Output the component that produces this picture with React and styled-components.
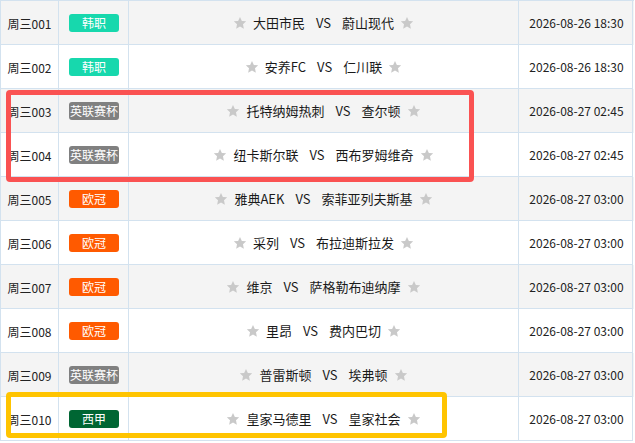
import styled, {createGlobalStyle} from 'styled-components'

const GlobalStyle = createGlobalStyle`
  body {
    margin: 0;
    background: #fff;
    font-family: "Microsoft YaHei", "Noto Sans CJK SC", sans-serif;
    color: #333;
  }
`

const Wrap = styled.div`
  position: relative;
  width: 634px;
`

const Table = styled.div`
  border-top: 1px solid #d3e2ef;
  border-left: 1px solid #d3e2ef;
`

const Row = styled.div`
  display: grid;
  grid-template-columns: 58px 70px 390px 114px;
  background: ${p => (p.$odd ? '#f4f4f4' : '#fff')};
`

const Cell = styled.div`
  height: 44px;
  box-sizing: border-box;
  border-right: 1px solid #d3e2ef;
  border-bottom: 1px solid #d3e2ef;
  display: flex;
  align-items: center;
  justify-content: center;
  font-size: 12px;
  white-space: nowrap;
`

const Num = styled(Cell)`
  padding-top: 1px;
  color: #222;
`

const DateCell = styled(Cell)`
  font-size: 12px;
  color: #222;
  padding-left: 2px;
`

const Badge = styled.span`
  display: inline-flex;
  align-items: center;
  justify-content: center;
  width: 50px;
  height: 18px;
  border-radius: 3px;
  background: ${p => p.$color};
  color: #fff;
  font-size: 12px;
  margin-left: 1px;
`

const Match = styled(Cell)`
  font-size: 13px;
  color: #1a1a1a;
  gap: 6px;
`

const Vs = styled.span`
  margin: 0 5px;
`

const Overlay = styled.div`
  position: absolute;
  left: 6px;
  top: ${p => p.$top}px;
  width: ${p => p.$w}px;
  height: ${p => p.$h}px;
  box-sizing: border-box;
  border: 5px solid ${p => p.$color};
  border-radius: 4px;
  pointer-events: none;
`

const Star = () => (
  <svg width="14" height="14" viewBox="0 0 24 24">
    <path
      d="M12 1.5l3.2 6.9 7.4.8-5.5 5.1 1.5 7.4L12 17.9l-6.6 3.8 1.5-7.4L1.4 9.2l7.4-.8z"
      fill="#c9c9c9"
    />
  </svg>
)

const colors = {
  '韩职': '#17d8ad',
  '英联赛杯': '#808080',
  '欧冠': '#ff5a00',
  '西甲': '#006633',
}

const matches = [
  ['周三001', '韩职', '大田市民', '蔚山现代', '2026-08-26 18:30'],
  ['周三002', '韩职', '安养FC', '仁川联', '2026-08-26 18:30'],
  ['周三003', '英联赛杯', '托特纳姆热刺', '查尔顿', '2026-08-27 02:45'],
  ['周三004', '英联赛杯', '纽卡斯尔联', '西布罗姆维奇', '2026-08-27 02:45'],
  ['周三005', '欧冠', '雅典AEK', '索菲亚列夫斯基', '2026-08-27 03:00'],
  ['周三006', '欧冠', '采列', '布拉迪斯拉发', '2026-08-27 03:00'],
  ['周三007', '欧冠', '维京', '萨格勒布迪纳摩', '2026-08-27 03:00'],
  ['周三008', '欧冠', '里昂', '费内巴切', '2026-08-27 03:00'],
  ['周三009', '英联赛杯', '普雷斯顿', '埃弗顿', '2026-08-27 03:00'],
  ['周三010', '西甲', '皇家马德里', '皇家社会', '2026-08-27 03:00'],
]

const App = () => (
  <Wrap>
    <GlobalStyle />
    <Table>
      {matches.map(([num, league, home, away, time], i) => (
        <Row key={num} $odd={i % 2 === 0}>
          <Num>{num}</Num>
          <Cell><Badge $color={colors[league]}>{league}</Badge></Cell>
          <Match>
            <Star />
            <span>{home}</span>
            <Vs>VS</Vs>
            <span>{away}</span>
            <Star />
          </Match>
          <DateCell>{time}</DateCell>
        </Row>
      ))}
    </Table>
    <Overlay $top={90} $w={468} $h={92} $color="#fa5252" />
    <Overlay $top={392} $w={441} $h={46} $color="#ffc400" />
  </Wrap>
)

export default App
